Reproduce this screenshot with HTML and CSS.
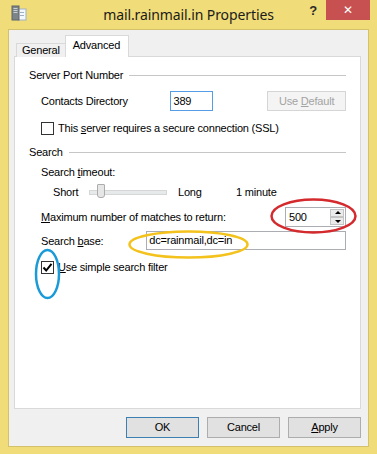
FILE: index.html
```html
<!DOCTYPE html>
<html lang="en">
<head>
    <meta charset="UTF-8">
    <meta name="viewport" content="width=device-width, initial-scale=1.0">
    <title>mail.rainmail.in Properties</title>
    <link rel="stylesheet" href="styles.css">
</head>
<body>

    <div class="window">
        <div class="titlebar">
            <svg class="app-icon" width="16" height="16" viewBox="0 0 16 16">
                <rect x="7" y="4" width="8" height="11" fill="#f4f7fb" stroke="#9fb1c6"/>
                <rect x="9" y="7" width="4" height="1" fill="#9fb1c6"/>
                <rect x="9" y="10" width="4" height="1" fill="#9fb1c6"/>
                <rect x="1" y="1" width="7" height="14" fill="#7d8589" stroke="#5e6569"/>
                <rect x="2.5" y="3" width="4" height="1" fill="#c9d0d3"/>
                <rect x="2.5" y="5" width="4" height="1" fill="#c9d0d3"/>
                <rect x="2.5" y="7" width="4" height="1" fill="#c9d0d3"/>
            </svg>
            <div class="title">mail.rainmail.in Properties</div>
            <div class="help">?</div>
            <div class="close">&#x2715;</div>
        </div>

        <div class="client">
            <div class="tabs">
                <div class="tab">General</div>
                <div class="tab active">Advanced</div>
            </div>

            <div class="panel">
                <div class="group-title">Server Port Number<span class="rule"></span></div>

                <div class="row row-port">
                    <span class="label label-port">Contacts Directory</span>
                    <div class="textbox focused port">389</div>
                    <div class="btn disabled">Use <u>D</u>efault</div>
                </div>

                <div class="row row-check">
                    <span class="checkbox"></span>
                    <span>This <u>s</u>erver requires a secure connection (SSL)</span>
                </div>

                <div class="group-title group-search">Search<span class="rule"></span></div>

                <div class="row row-timeout"><span>Search <u>t</u>imeout:</span></div>

                <div class="row row-slider">
                    <span class="slider-label">Short</span>
                    <div class="slider"><span class="thumb"></span></div>
                    <span class="slider-long">Long</span>
                    <span>1 minute</span>
                </div>

                <div class="row row-max">
                    <span class="label"><u>M</u>aximum number of matches to return:</span>
                    <div class="spinner">
                        <span class="spin-value">500</span>
                        <div class="spin-buttons">
                            <span class="spin up"></span>
                            <span class="spin down"></span>
                        </div>
                    </div>
                </div>

                <div class="row row-base">
                    <span class="label label-base">Search <u>b</u>ase:</span>
                    <div class="textbox base">dc=rainmail,dc=in</div>
                </div>

                <div class="row row-check row-filter">
                    <span class="checkbox checked">
                        <svg width="11" height="11" viewBox="0 0 11 11">
                            <path d="M1.5 5.5 L4.2 8.5 L9.5 1.8" fill="none" stroke="#000" stroke-width="2"/>
                        </svg>
                    </span>
                    <span><u>U</u>se simple search filter</span>
                </div>
            </div>

            <div class="buttons">
                <div class="btn default">OK</div>
                <div class="btn">Cancel</div>
                <div class="btn"><u>A</u>pply</div>
            </div>
        </div>
    </div>

    <svg class="marks" width="377" height="457" viewBox="0 0 377 457">
        <ellipse cx="313.5" cy="216" rx="42" ry="16.5" fill="none" stroke="#d42a2e" stroke-width="2.5"/>
        <ellipse cx="188.5" cy="244.5" rx="59" ry="13" fill="none" stroke="#f4c21d" stroke-width="2.5"/>
        <ellipse cx="47.5" cy="274" rx="11.5" ry="24" fill="none" stroke="#1b9ad8" stroke-width="2.5"/>
    </svg>

</body>
</html>
```

FILE: styles.css
```css
body {
    margin: 0;
    background-color: #ffffff;
    font-family: "Liberation Sans", Arial, sans-serif;
    font-size: 11px;
    letter-spacing: -0.2px;
    color: #000;
}

.window {
    width: 377px;
    height: 454px;
    box-sizing: border-box;
    background-color: #f0dc78;
    padding: 0 8px 7px 8px;
    display: flex;
    flex-direction: column;
}

.titlebar {
    height: 29px;
    display: flex;
    align-items: flex-start;
    position: relative;
}

.app-icon {
    margin: 5px 0 0 3px;
}

.title {
    position: absolute;
    left: -8px;
    right: -8px;
    top: 5px;
    text-align: center;
    font-family: "Noto Sans", sans-serif;
    font-size: 14px;
    letter-spacing: -0.1px;
    color: #1b1b1b;
    pointer-events: none;
}

.help {
    margin: 3px 0 0 auto;
    width: 20px;
    text-align: center;
    font-family: "Liberation Sans", sans-serif;
    font-weight: bold;
    font-size: 13px;
    color: #2a2a2a;
}

.close {
    width: 44px;
    height: 20px;
    margin-left: 3px;
    margin-right: -1px;
    background-color: #c75050;
    color: #ffffff;
    font-size: 12px;
    line-height: 20px;
    text-align: center;
    font-family: "DejaVu Sans", sans-serif;
}

.client {
    flex: 1;
    background-color: #f0f0f0;
    border: 1px solid #d3c26a;
    padding: 6px 7px 0 5px;
    display: flex;
    flex-direction: column;
}

.tabs {
    display: flex;
    align-items: flex-end;
    height: 21px;
    padding-left: 2px;
    margin-bottom: -1px;
    position: relative;
    z-index: 1;
}

.tab {
    height: 13px;
    padding: 0 5px;
    line-height: 13px;
    border: 1px solid #d9d9d9;
    border-bottom: none;
    background-color: #f0f0f0;
}

.tab.active {
    height: 21px;
    line-height: 19px;
    padding: 0 8px 0 7px;
    background-color: #ffffff;
    border-color: #d9d9d9;
    margin-left: -1px;
}

.panel {
    height: 353px;
    box-sizing: border-box;
    background-color: #ffffff;
    border: 1px solid #d9d9d9;
    padding: 12px 14px 0 14px;
}

.group-title {
    display: flex;
    align-items: center;
    height: 13px;
    line-height: 13px;
}

.rule {
    flex: 1;
    height: 1px;
    margin-left: 6px;
    background-color: #a0a0a0;
    opacity: 0.6;
}

.row {
    display: flex;
    align-items: center;
    padding-left: 12px;
}

.label-port {
    width: 130px;
}

.row-port {
    margin-top: 9px;
    height: 20px;
}

.textbox {
    height: 20px;
    box-sizing: border-box;
    border: 1px solid #abadb3;
    background-color: #ffffff;
    padding: 0 3px;
    line-height: 18px;
}

.textbox.focused {
    border-color: #569de5;
}

.textbox.port {
    width: 43px;
    padding-left: 2px;
}

.btn {
    width: 73px;
    height: 21px;
    box-sizing: border-box;
    border: 1px solid #adadad;
    background-color: #e1e1e1;
    text-align: center;
    line-height: 19px;
}

.btn.default {
    border-color: #3c7fb1;
}

.btn.disabled {
    width: 79px;
    height: 20px;
    margin-left: 54px;
    color: #a3a3a3;
    background-color: #f4f4f4;
    border-color: #d5d5d5;
}

.row-check {
    margin-top: 10px;
    height: 14px;
}

.checkbox {
    width: 13px;
    height: 13px;
    box-sizing: border-box;
    border: 1px solid #333333;
    background-color: #ffffff;
    margin-right: 4px;
    display: flex;
    align-items: center;
    justify-content: center;
}

.group-search {
    margin-top: 11px;
}

.row-timeout {
    margin-top: 6px;
    height: 13px;
}

.row-slider {
    margin-top: 7px;
    height: 14px;
    padding-left: 24px;
}

.slider-label {
    width: 36px;
}

.slider {
    width: 76px;
    height: 3px;
    background-color: #e7eaea;
    border: 1px solid #d6d6d6;
    position: relative;
}

.thumb {
    position: absolute;
    left: 7px;
    top: -7px;
    width: 6px;
    height: 12px;
    background-color: #e6e6e6;
    border: 1px solid #acacac;
    border-radius: 1px 1px 3px 3px;
}

.slider-long {
    margin-left: 11px;
    width: 58px;
}

.row-max {
    margin-top: 8px;
    height: 20px;
    justify-content: space-between;
}

.spinner {
    width: 61px;
    height: 20px;
    box-sizing: border-box;
    border: 1px solid #abadb3;
    display: flex;
    align-items: center;
    justify-content: space-between;
    padding: 0 1px 0 3px;
}

.spin-buttons {
    display: flex;
    flex-direction: column;
}

.spin {
    width: 14px;
    height: 8px;
    box-sizing: border-box;
    background-color: #ebebeb;
    border: 1px solid #c4c4c4;
    position: relative;
}

.spin::after {
    content: "";
    position: absolute;
    left: 4px;
    border-left: 3px solid transparent;
    border-right: 3px solid transparent;
}

.spin.up::after {
    top: 1px;
    border-bottom: 3px solid #000;
}

.spin.down::after {
    top: 2px;
    border-top: 3px solid #000;
}

.row-base {
    margin-top: 4px;
    height: 19px;
}

.label-base {
    width: 106px;
}

.textbox.base {
    width: 201px;
    height: 19px;
    padding-left: 2px;
    line-height: 17px;
}

.row-filter {
    margin-top: 10px;
}

.buttons {
    display: flex;
    justify-content: flex-end;
    gap: 8px;
    margin-top: 8px;
}

.marks {
    position: absolute;
    left: 0;
    top: 0;
    pointer-events: none;
}
```
